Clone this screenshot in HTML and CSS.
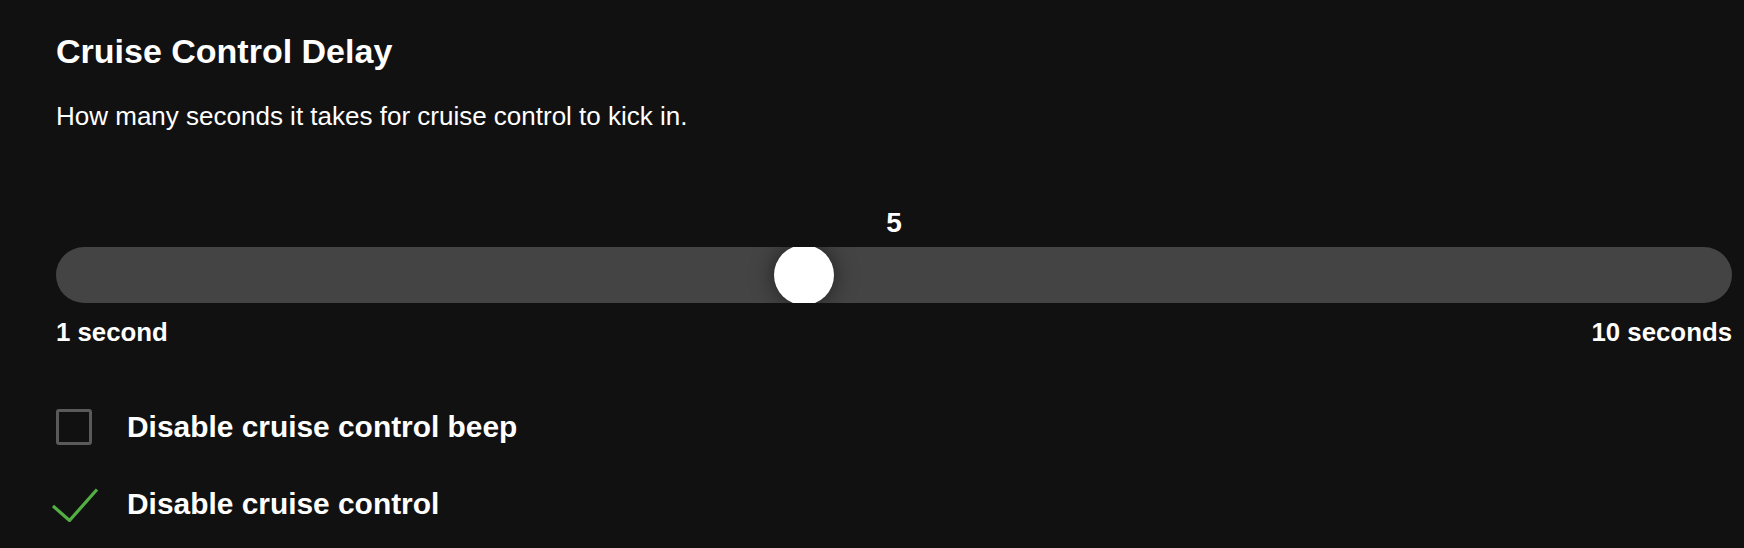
FILE: index.html
```html
<!DOCTYPE html>
<html lang="en">
<head>
    <meta charset="UTF-8">
    <meta name="viewport" content="width=device-width, initial-scale=1.0">
    <title>Cruise Control Delay</title>
    <link rel="stylesheet" href="styles.css">
</head>
<body>
    <div class="settings">
        <h1 class="title">Cruise Control Delay</h1>
        <p class="description">How many seconds it takes for cruise control to kick in.</p>

        <div class="slider">
            <div class="slider-value">5</div>
            <div class="slider-track">
                <div class="slider-thumb" style="left: calc((100% - 60px) * 0.4444);"></div>
            </div>
            <div class="slider-labels">
                <span>1 second</span>
                <span>10 seconds</span>
            </div>
        </div>

        <div class="options">
            <label class="option">
                <span class="box"></span>
                <span class="option-text">Disable cruise control beep</span>
            </label>
            <label class="option">
                <span class="box checked">
                    <svg viewBox="0 0 36 36" width="36" height="36">
                        <polyline points="-3,20 13.5,34.5 41,3.5" fill="none" stroke="#52b043" stroke-width="3.2" />
                    </svg>
                </span>
                <span class="option-text">Disable cruise control</span>
            </label>
        </div>
    </div>
</body>
</html>
```

FILE: styles.css
```css
body {
    margin: 0;
    background-color: #111111;
    color: #ffffff;
    font-family: "Liberation Sans", Arial, Helvetica, sans-serif;
}
.settings {
    padding: 31px 12px 0 56px;
}
.title {
    margin: 0;
    font-size: 34px;
    line-height: 40px;
    font-weight: bold;
}
.description {
    margin: 29px 0 0;
    font-size: 26px;
    line-height: 32px;
}
.slider {
    margin-top: 75px;
}
.slider-value {
    text-align: center;
    font-size: 28px;
    line-height: 32px;
    font-weight: bold;
}
.slider-track {
    position: relative;
    margin-top: 8px;
    height: 56px;
    border-radius: 28px;
    background: #444444;
    overflow: hidden;
}
.slider-thumb {
    position: absolute;
    top: -2px;
    width: 60px;
    height: 60px;
    border-radius: 50%;
    background: #ffffff;
    box-shadow: 0 0 22px rgba(0, 0, 0, 0.55);
}
.slider-labels {
    display: flex;
    justify-content: space-between;
    margin-top: 14px;
    font-size: 25.8px;
    line-height: 30px;
    font-weight: bold;
}
.options {
    display: flex;
    flex-direction: column;
    gap: 41px;
    margin-top: 62px;
}
.option {
    display: flex;
    align-items: center;
    gap: 35px;
}
.box {
    box-sizing: border-box;
    width: 36px;
    height: 36px;
    border: 3px solid #5a5a5a;
    border-radius: 3px;
}
.box.checked {
    border: none;
}
.box svg {
    display: block;
    overflow: visible;
}
.option-text {
    font-size: 29.9px;
    line-height: 36px;
    font-weight: bold;
}
```
